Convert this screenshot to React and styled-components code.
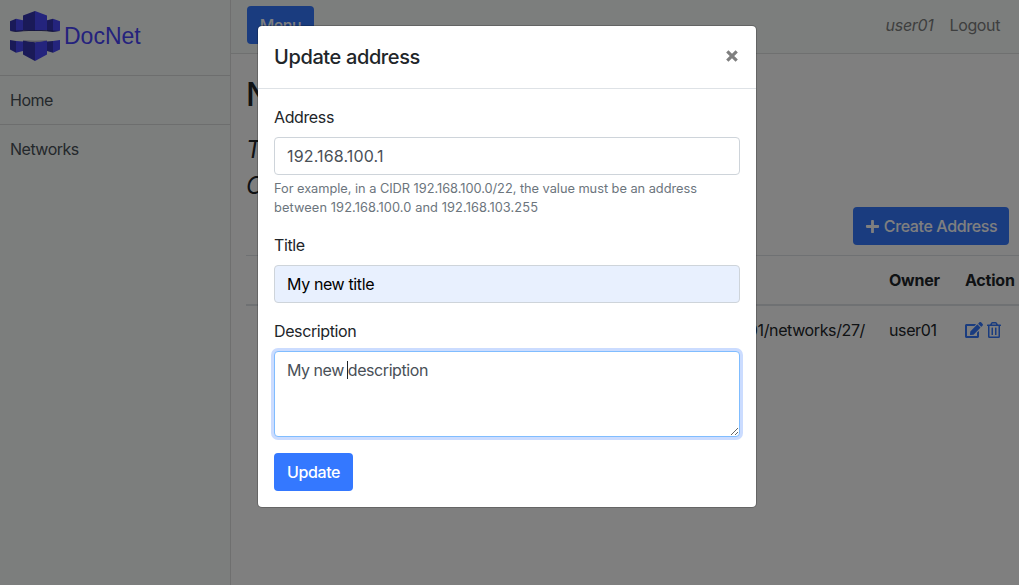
import React from "react";
import styled, { createGlobalStyle } from "styled-components";
import { FaPlus, FaEdit, FaRegTrashAlt } from "react-icons/fa";

const GlobalStyle = createGlobalStyle`
  *, *::before, *::after { box-sizing: border-box; }
  body {
    margin: 0;
    overflow: hidden;
    background: #fff;
    color: #212529;
    font: 400 16px/1.5 Inter, "Liberation Sans", sans-serif;
    letter-spacing: -0.38px;
  }
  button, input, textarea { font: inherit; letter-spacing: inherit; }
`;

const Page = styled.div`
  display: flex;
  height: 585px;
  overflow: hidden;
`;

const Sidebar = styled.nav`
  flex: 0 0 231px;
  background: #f8fcfa;
  border-right: 1px solid #dfdfdf;
`;

const Brand = styled.div`
  display: flex;
  align-items: center;
  height: 76px;
  padding: 0 0 4px 10px;
  gap: 4px;
  border-bottom: 1px solid #dbdddc;
  color: #4844fb;
  font-family: "Liberation Sans", sans-serif;
  font-size: 23px;
  letter-spacing: 0;
`;

const BrandName = styled.span`
  padding-top: 2px;
`;

const NavItem = styled.a`
  display: block;
  height: 49px;
  padding: 12px 10px;
  color: #495057;
  letter-spacing: -0.5px;
  border-bottom: ${(p) => (p.$last ? "0" : "1px solid #dbdddc")};
`;

const Main = styled.div`
  flex: 1;
  min-width: 0;
`;

const TopBar = styled.header`
  display: flex;
  align-items: center;
  height: 54px;
  padding: 0 19px 4px 16px;
  background: #f8fcfa;
  border-bottom: 1px solid #dfe1e0;
  color: #7d7e7e;
`;

const UserName = styled.em`
  margin: 0 16px 0 auto;
  letter-spacing: -0.3px;
`;

const Button = styled.button`
  display: inline-flex;
  align-items: center;
  justify-content: center;
  gap: 4px;
  width: ${(p) => p.$width};
  height: 38px;
  padding: 0;
  border: 0;
  border-radius: 4px;
  background: #3478ff;
  color: #fff;
  font-weight: 450;
`;

const Content = styled.main`
  padding: 21px 0 0 15px;
`;

const Heading = styled.h2`
  margin: 0 0 17px;
  font-size: 32px;
  line-height: 40px;
  font-weight: 500;
`;

const Lead = styled.div`
  font-size: 24px;
  line-height: 36px;
  font-style: italic;
`;

const Actions = styled.div`
  display: flex;
  justify-content: flex-end;
  padding: 3px 10px 10px 0;
`;

const Table = styled.div`
  display: grid;
  grid-template-columns: 631px 76px 66px;
`;

const HeadCell = styled.div`
  height: 51px;
  padding: 12px 0 0 12px;
  border-top: 1px solid #dee2e6;
  border-bottom: 2px solid #dee2e6;
  font-weight: 700;
  white-space: nowrap;
  letter-spacing: -0.22px;
`;

const Cell = styled.div`
  display: flex;
  align-items: center;
  justify-content: ${(p) => (p.$end ? "flex-end" : "flex-start")};
  gap: 3px;
  height: 47px;
  padding: 0 12px;
  color: ${(p) => (p.$link ? "#3478ff" : "inherit")};
`;

const Backdrop = styled.div`
  position: absolute;
  inset: 0;
  background: rgba(0, 0, 0, 0.5);
`;

const Dialog = styled.section`
  position: absolute;
  top: 25px;
  left: 257px;
  width: 500px;
  height: 483px;
  border: 1px solid rgba(0, 0, 0, 0.2);
  border-radius: 5px;
  background: #fff;
  background-clip: padding-box;
`;

const DialogHeader = styled.header`
  display: flex;
  justify-content: space-between;
  height: 63px;
  padding: 16px;
  border-bottom: 1px solid #dee2e6;
`;

const DialogTitle = styled.h5`
  margin: 0;
  font-size: 20px;
  line-height: 30px;
  font-weight: 500;
`;

const Close = styled.button`
  width: 16px;
  height: 28px;
  padding: 0;
  border: 0;
  background: none;
  color: #7f7f7f;
`;

const Form = styled.form`
  padding: 16px;
`;

const Field = styled.div`
  position: relative;
  margin-bottom: 16px;
`;

const Label = styled.label`
  display: block;
  margin-bottom: 8px;
`;

const Input = styled.input`
  display: block;
  width: 100%;
  height: 38px;
  padding: 6px 12px;
  border: 1px solid #ced4da;
  border-radius: 4px;
  outline: 0;
  background: ${(p) => (p.$filled ? "#e8f0fe" : "#fff")};
  color: ${(p) => (p.$filled ? "#000" : "#495057")};
  letter-spacing: ${(p) => (p.$numeric ? "0.15px" : "inherit")};
`;

const Textarea = styled.textarea`
  display: block;
  width: 100%;
  height: 86px;
  padding: 6px 12px;
  border: 1px solid #80bdff;
  border-radius: 4px;
  outline: 0;
  box-shadow: 0 0 0 3px #cbdcff;
  color: #495057;
  letter-spacing: -0.42px;
  word-spacing: -0.2px;
  resize: vertical;
`;

const Caret = styled.span`
  position: absolute;
  left: 73px;
  top: 42px;
  width: 1px;
  height: 18px;
  background: #212529;
`;

const Help = styled.small`
  display: block;
  margin-top: 4px;
  color: #6c757d;
  font-size: 12.8px;
  line-height: 19.2px;
  white-space: nowrap;
`;

const HelpLine = styled.span`
  display: block;
  letter-spacing: ${(p) => p.$tracking};
`;

function Logo() {
  return (
    <svg width="50" height="50" viewBox="0 0 50 50">
      <g fill="#4848fb">
        <path d="M6 7.7 13 9.3V20L6 20.7zM43 7.7 50 10.3V19.7L43 20.7z" />
        <path d="M6 30 13 30.5V40L6 41.7zM43 30 50 29V38.5L43 41.7z" />
        <path d="M25 0 37 4.5V19.3L25 20z" />
        <path d="M25 31.3 37 29.5V43.5L25 50z" />
      </g>
      <g fill="#3434b0">
        <path d="M6 7.7 0 10.3V19.7L6 20.7zM43 7.7V20.7L37 20V9.3z" />
        <path d="M0 29 6 30V41.7L0 38.5zM37 30.5 43 30V41.7L37 40z" />
        <path d="M25 0 13 4.5V19.3L25 20z" />
        <path d="M13 29.5 25 31.3V50L13 43.5z" />
      </g>
      <path fill="#28286e" d="M0 19.9 13 19.3 25 18.9 37 19.3 50 19.9 43 20.8 37 20.3 25 19.8 13 20.3 6 20.8z" />
      <path fill="#b5b5c8" d="M13 29.3 25 29.8 37 29.3V29.8L25 31.3 13 29.8z" />
    </svg>
  );
}

export default function App() {
  return (
    <>
      <GlobalStyle />
      <Page>
        <Sidebar>
          <Brand><Logo /><BrandName>DocNet</BrandName></Brand>
          <NavItem>Home</NavItem>
          <NavItem $last>Networks</NavItem>
        </Sidebar>
        <Main>
          <TopBar>
            <Button $width="67px">Menu</Button>
            <UserName>user01</UserName>
            <span>Logout</span>
          </TopBar>
          <Content>
            <Heading>N</Heading>
            <Lead>T</Lead>
            <Lead>C</Lead>
            <Actions>
              <Button $width="156px"><FaPlus size={15} />Create Address</Button>
            </Actions>
            <Table>
              <HeadCell />
              <HeadCell>Owner</HeadCell>
              <HeadCell>Action</HeadCell>
              <Cell $end>01/networks/27/</Cell>
              <Cell>user01</Cell>
              <Cell $link><FaEdit size={18} /><FaRegTrashAlt size={16} /></Cell>
            </Table>
          </Content>
        </Main>
      </Page>
      <Backdrop />
      <Dialog>
        <DialogHeader>
          <DialogTitle>Update address</DialogTitle>
          <Close aria-label="Close">
            <svg width="16" height="28" viewBox="0 0 16 28">
              <path d="M3.3 9.3 12.7 18.7M12.7 9.3 3.3 18.7" stroke="currentColor" strokeWidth="3.2" />
            </svg>
          </Close>
        </DialogHeader>
        <Form>
          <Field>
            <Label>Address</Label>
            <Input readOnly $numeric value="192.168.100.1" />
            <Help>
              <HelpLine $tracking="-0.03px">
                For example, in a CIDR 192.168.100.0/22, the value must be an address
              </HelpLine>
              <HelpLine $tracking="0.1px">between 192.168.100.0 and 192.168.103.255</HelpLine>
            </Help>
          </Field>
          <Field>
            <Label>Title</Label>
            <Input readOnly $filled value="My new title" />
          </Field>
          <Field>
            <Label>Description</Label>
            <Textarea readOnly value="My new description" />
            <Caret />
          </Field>
          <Button type="button" $width="79px">Update</Button>
        </Form>
      </Dialog>
    </>
  );
}
